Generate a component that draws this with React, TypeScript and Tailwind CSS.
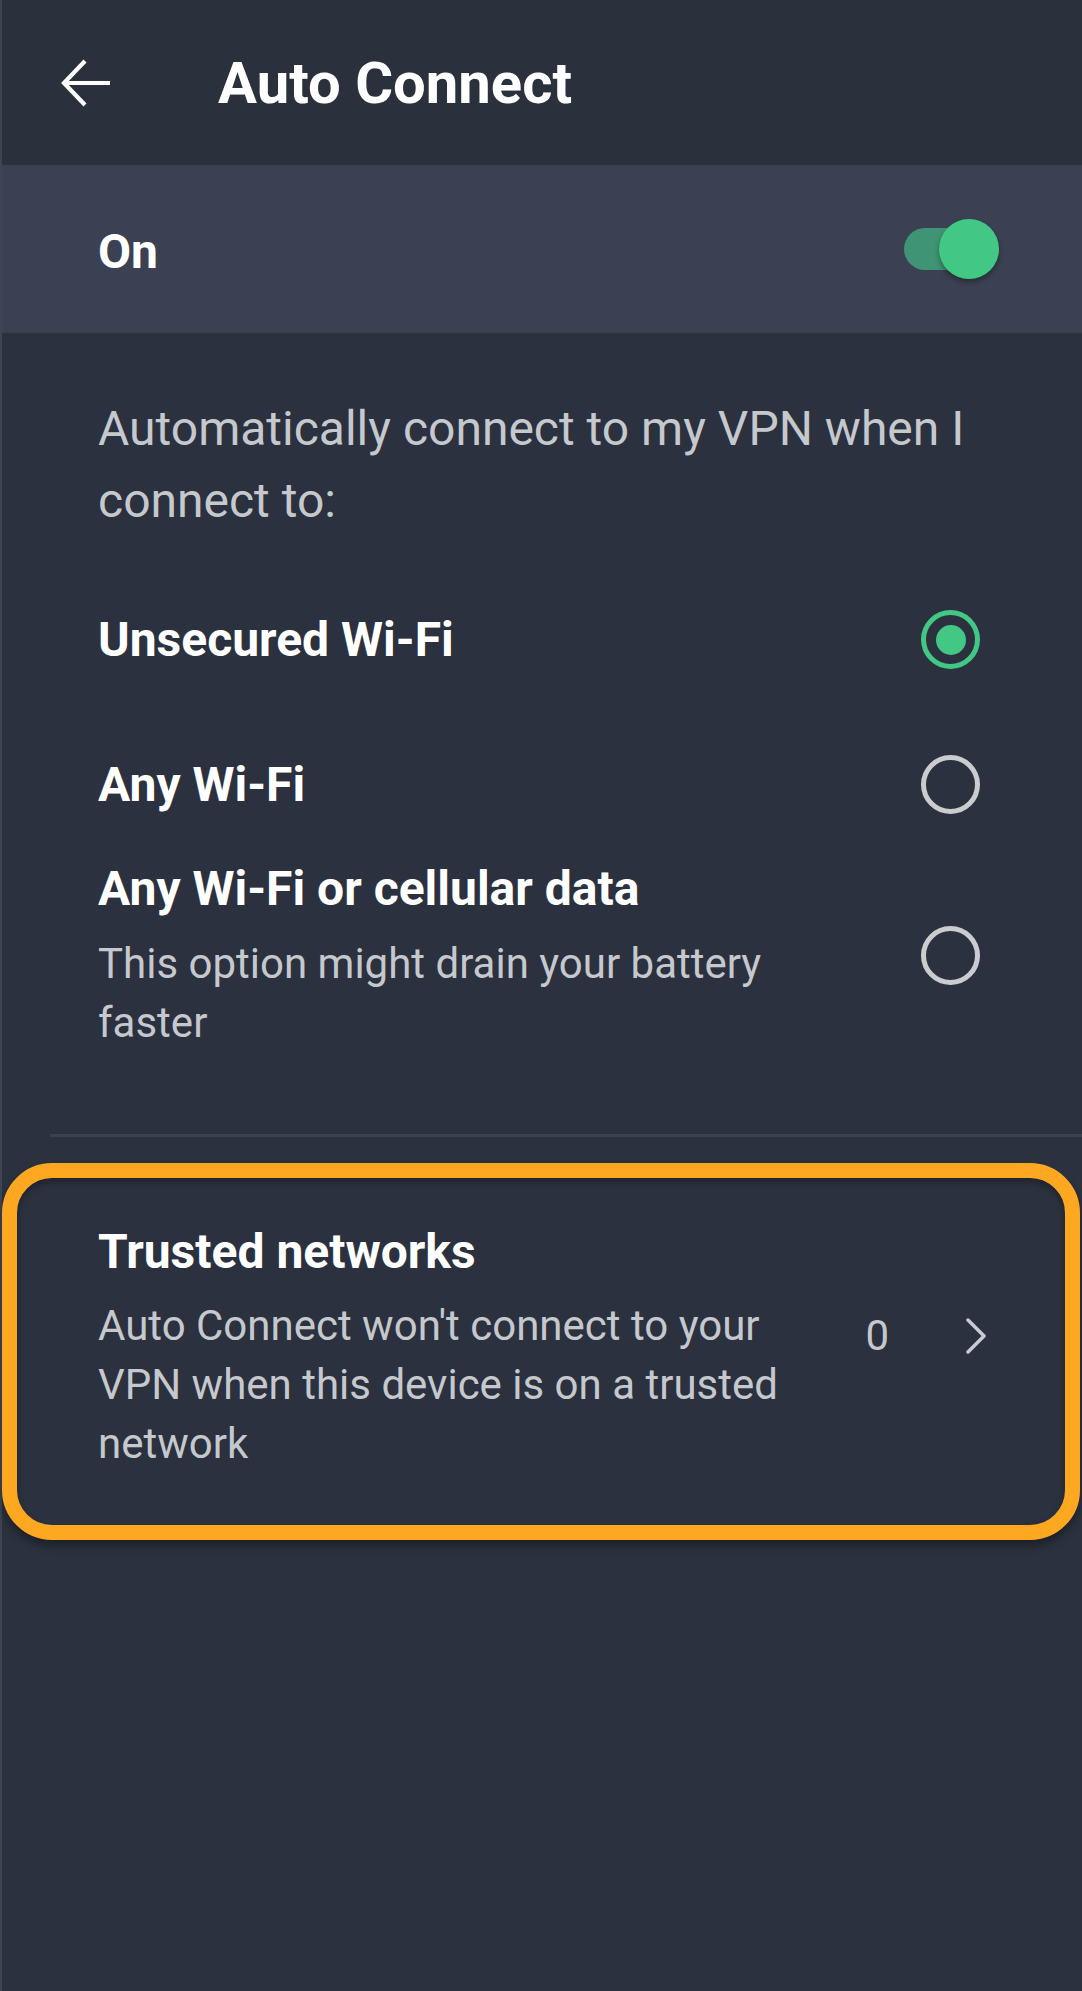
import React, { useState } from 'react';

interface RadioProps {
  checked?: boolean;
}

const Radio: React.FC<RadioProps> = ({ checked }) => (
  <div
    className={`w-[59px] h-[59px] shrink-0 rounded-full border-[5px] flex items-center justify-center ${
      checked ? 'border-[#43c785]' : 'border-[#cbccd0]'
    }`}
  >
    {checked && <div className="w-[30px] h-[30px] rounded-full bg-[#43c785]" />}
  </div>
);

const App: React.FC = () => {
  const [selected, setSelected] = useState('unsecured');
  const [enabled, setEnabled] = useState(true);

  return (
    <div className="min-h-[1991px] w-full bg-[#2b313e] border-l-2 border-[#3e4450] font-[Roboto,sans-serif] text-white">
      {/* 헤더 */}
      <div className="h-[165px] flex items-center bg-[#2a303c]">
        <svg
          className="ml-[58px] w-[52px] h-[52px] shrink-0"
          viewBox="0 0 26 26"
          fill="none"
          stroke="white"
          strokeWidth={2.1}
        >
          <path d="M25 13H2" />
          <path d="M12.5 2L2 13l10.5 11" />
        </svg>
        <h1 className="ml-[106px] text-[58px] font-bold leading-none">Auto Connect</h1>
      </div>

      {/* 토글 */}
      <div className="h-[168px] flex items-center justify-between pl-[96px] pr-[83px] bg-[#3b4152]">
        <span className="mt-[6px] text-[48px] font-bold">On</span>
        <button
          onClick={() => setEnabled(!enabled)}
          className="relative w-[95px] h-[60px]"
        >
          <span className="absolute left-0 top-[9px] w-[80px] h-[42px] rounded-full bg-[#3f9475]" />
          <span className="absolute right-0 top-0 w-[60px] h-[60px] rounded-full bg-[#43c785] shadow-[0_3px_5px_rgba(0,0,0,0.35)]" />
        </button>
      </div>

      {/* 옵션 */}
      <div className="pl-[96px] pr-[102px]">
        <p className="mt-[60px] text-[48px] leading-[72px] text-[#c5c8cd]">
          Automatically connect to my VPN when I connect to:
        </p>

        <div className="mt-[30px]">
          <button
            onClick={() => setSelected('unsecured')}
            className="w-full h-[145px] flex items-center justify-between text-left"
          >
            <span className="text-[48px] font-bold">Unsecured Wi-Fi</span>
            <Radio checked={selected === 'unsecured'} />
          </button>
          <button
            onClick={() => setSelected('any')}
            className="w-full h-[145px] flex items-center justify-between text-left"
          >
            <span className="text-[48px] font-bold">Any Wi-Fi</span>
            <Radio checked={selected === 'any'} />
          </button>
          <button
            onClick={() => setSelected('cellular')}
            className="w-full pt-[2px] flex items-center justify-between text-left"
          >
            <div>
              <div className="text-[48px] font-bold leading-[60px]">Any Wi-Fi or cellular data</div>
              <div className="mt-[15px] w-[700px] text-[42px] leading-[59px] text-[#c5c8cd]">
                This option might drain your battery faster
              </div>
            </div>
            <Radio checked={selected === 'cellular'} />
          </button>
        </div>
      </div>

      <div className="mt-[82px] ml-[48px] h-[3px] bg-[#3b414d]" />

      {/* 신뢰할 수 있는 네트워크 */}
      <div className="mt-[26px] mr-[2px] rounded-[50px] border-[15px] border-[#fea822] shadow-[0_6px_8px_rgba(0,0,0,0.35),inset_0_4px_6px_rgba(0,0,0,0.3)]">
        <div className="flex items-center pt-[44px] pb-[52px] pl-[81px] pr-[78px]">
          <div className="flex-1">
            <div className="text-[48px] font-bold leading-[60px]">Trusted networks</div>
            <div className="mt-[14px] w-[700px] text-[42px] leading-[59px] text-[#c5c8cd]">
              Auto Connect won't connect to your VPN when this device is on a trusted network
            </div>
          </div>
          <div className="flex items-center mb-[24px]">
            <span className="text-[42px] leading-none text-[#c5c8cd]">0</span>
            <svg
              className="ml-[76px] w-[22px] h-[36px]"
              viewBox="0 0 22 36"
              fill="none"
              stroke="#c8cbd0"
              strokeWidth={3.5}
              strokeLinecap="round"
              strokeLinejoin="round"
            >
              <path d="M3 2l16 16L3 34" />
            </svg>
          </div>
        </div>
      </div>
    </div>
  );
};

export default App;
